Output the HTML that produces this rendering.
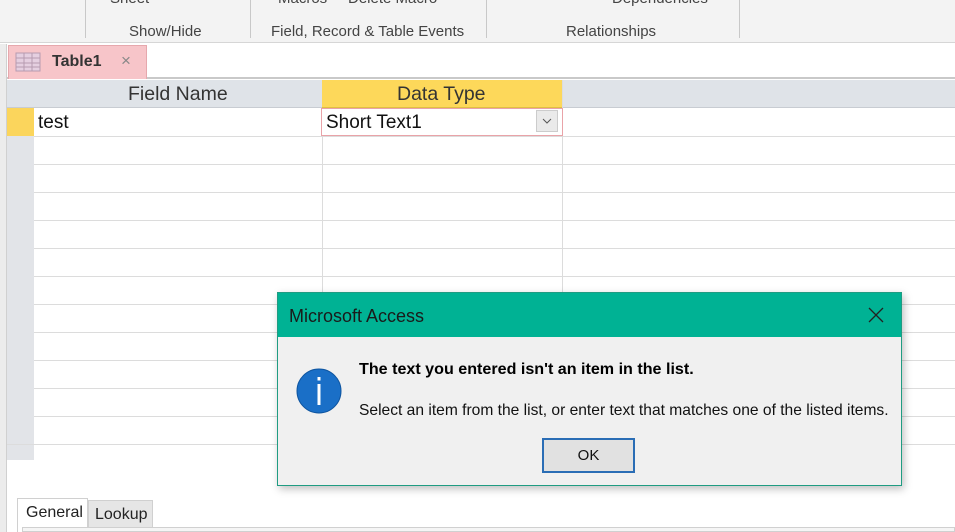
<!DOCTYPE html>
<html><head><style>
*{margin:0;padding:0;box-sizing:border-box}
body{width:955px;height:532px;overflow:hidden;background:#fff;font-family:"Segoe UI","Liberation Sans",sans-serif;position:relative}
.a{position:absolute}
.rib{left:0;top:0;width:955px;height:43px;background:#f3f3f3;border-bottom:1px solid #d6d6d6}
.sep{top:0;width:1px;height:38px;background:#c8c8c8}
.lbl{top:23px;font-size:15px;color:#444}
.hl{height:1px;background:#dcdcdc;left:34px;width:921px}
.rs{left:7px;width:27px;background:#e2e4e8}
</style></head><body>
<div class="a rib"></div>
<div class="a" style="left:110px;top:-10px;font-size:15px;color:#444">Sheet</div>
<div class="a" style="left:278px;top:-10px;font-size:15px;color:#444">Macros&nbsp;&nbsp;&nbsp;&nbsp;&nbsp;Delete Macro</div>
<div class="a" style="left:612px;top:-10px;font-size:15px;color:#444">Dependencies</div>
<div class="a sep" style="left:85px"></div><div class="a sep" style="left:250px"></div><div class="a sep" style="left:486px"></div><div class="a sep" style="left:739px"></div>
<div class="a lbl" style="left:129px">Show/Hide</div>
<div class="a lbl" style="left:271px">Field, Record &amp; Table Events</div>
<div class="a lbl" style="left:566px">Relationships</div>
<div class="a" style="left:0;top:44px;width:7px;height:488px;background:#ececec;border-right:1px solid #d0d0d0"></div>
<div class="a" style="left:7px;top:44px;width:948px;height:35px;background:#fff;border-bottom:2px solid #c9c9c9"></div>
<div class="a" style="left:8px;top:45px;width:139px;height:34px;background:#f7c5c9;border:1px solid #e6a8ad;border-bottom:none"></div>
<svg class="a" style="left:15px;top:52px" width="26" height="20"><rect x="1" y="1" width="24" height="18" fill="#e5cfe0" stroke="#b79bb0"/><path d="M1 6H25M1 11H25M1 15H25M9 1V19M17 1V19" stroke="#b79bb0"/></svg>
<div class="a" style="left:52px;top:53px;font-size:16px;font-weight:bold;color:#333">Table1</div>
<div class="a" style="left:121px;top:51px;font-size:17px;color:#888">×</div>
<div class="a" style="left:7px;top:80px;width:948px;height:28px;background:#dfe3e8;border-bottom:1px solid #c8ccd2"></div>
<div class="a" style="left:322px;top:80px;width:240px;height:28px;background:#fdd85a;border-bottom:1px solid #e0c040"></div>
<div class="a" style="left:128px;top:83px;font-size:19.5px;color:#333">Field Name</div>
<div class="a" style="left:397px;top:83px;font-size:19.5px;color:#333">Data Type</div>
<div class="a rs" style="top:108px;height:352px"></div>
<div class="a" style="left:7px;top:108px;width:27px;height:28px;background:#fbd55c"></div>
<div class="a hl" style="top:136px"></div><div class="a hl" style="top:164px"></div><div class="a hl" style="top:192px"></div><div class="a hl" style="top:220px"></div><div class="a hl" style="top:248px"></div><div class="a hl" style="top:276px"></div><div class="a hl" style="top:304px"></div><div class="a hl" style="top:332px"></div><div class="a hl" style="top:360px"></div><div class="a hl" style="top:388px"></div><div class="a hl" style="top:416px"></div><div class="a hl" style="top:444px;left:7px;width:948px"></div>
<div class="a" style="left:322px;top:108px;width:1px;height:336px;background:#dcdcdc"></div>
<div class="a" style="left:562px;top:80px;width:1px;height:364px;background:#dcdcdc"></div>
<div class="a" style="left:38px;top:112px;font-size:19px;color:#111">test</div>
<div class="a" style="left:321px;top:108px;width:242px;height:28px;border:1px solid #e9a3a8;background:#fff"></div>
<div class="a" style="left:326px;top:112px;font-size:19px;color:#111">Short Text1</div>
<div class="a" style="left:536px;top:110px;width:22px;height:22px;background:#eaeaea;border:1px solid #ccc"><svg width="20" height="20"><path d="M6 8L10 12L14 8" stroke="#555" fill="none"/></svg></div>
<div class="a" style="left:17px;top:498px;width:71px;height:34px;background:#fff;border:1px solid #d0d0d0;border-bottom:none;font-size:16px;color:#222;padding:5px 0 0 8px">General</div>
<div class="a" style="left:88px;top:500px;width:65px;height:32px;background:#e6e6e6;border:1px solid #d0d0d0;border-bottom:none;font-size:16px;color:#222;padding:5px 0 0 6px">Lookup</div>
<div class="a" style="left:22px;top:527px;width:933px;height:5px;border:1px solid #d0d0d0;background:#f5f5f5"></div>
<div class="a" style="left:277px;top:292px;width:625px;height:194px;background:#f0f0f0;border:1px solid #1f9c82;box-shadow:2px 3px 8px rgba(0,0,0,.25)">
<div style="height:44px;background:#00b294;position:relative">
<div class="a" style="left:11px;top:13px;font-size:18px;color:#1a1a1a">Microsoft Access</div>
<svg class="a" style="left:590px;top:14px" width="16" height="16"><path d="M1 1L15 15M15 1L1 15" stroke="#222" stroke-width="1.3"/></svg>
</div>
<svg class="a" style="left:18px;top:75px" width="46" height="46"><circle cx="23" cy="23" r="22" fill="#1a6fc7" stroke="#0e55a0"/><rect x="21.5" y="9" width="3" height="3.5" fill="#fff"/><rect x="21.5" y="16" width="3" height="21" fill="#fff"/></svg>
<div class="a" style="left:81px;top:67px;font-size:16.1px;font-weight:bold;color:#000">The text you entered isn't an item in the list.</div>
<div class="a" style="left:81px;top:109px;font-size:15.6px;color:#111">Select an item from the list, or enter text that matches one of the listed items.</div>
<div class="a" style="left:264px;top:145px;width:93px;height:35px;background:#e1e1e1;border:2px solid #2a6db5;font-size:15px;text-align:center;line-height:31px;color:#111">OK</div>
</div>
</body></html>
